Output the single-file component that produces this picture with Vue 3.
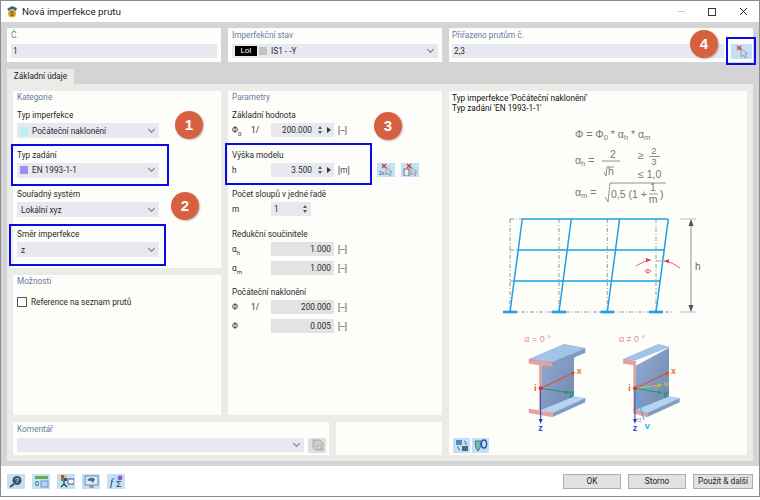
<template>
  <div class="window">
    <header class="titlebar">
      <svg class="app-icon" width="12" height="13" viewBox="0 0 12 13">
        <path d="M1 4 L6 1 L11 3 L10 6 L6 4 L3 6 Z" fill="#3d5f86" />
        <circle cx="6" cy="8.5" r="4" fill="#e2a92e" />
        <text x="6" y="11" font-size="7" text-anchor="middle" fill="#3a3a3a" class="sans">6</text>
      </svg>
      <span class="title">Nová imperfekce prutu</span>
      <div class="win-controls">
        <span class="win-min"></span>
        <span class="win-max"></span>
        <svg width="9" height="9" viewBox="0 0 9 9"><path d="M1 1 L8 8 M8 1 L1 8" stroke="#222" stroke-width="1" fill="none" /></svg>
      </div>
    </header>

    <main class="main">
      <div class="top-row">
        <section class="panel top-panel">
          <div class="group-title">Č.</div>
          <div class="input">1</div>
        </section>
        <section class="panel top-panel">
          <div class="group-title">Imperfekční stav</div>
          <div class="select">
            <span class="chip">LoI</span>
            <span class="swatch grey"></span>
            <span>IS1 - -Y</span>
          </div>
        </section>
        <section class="panel top-panel assigned">
          <div class="group-title">Přiřazeno prutům č.</div>
          <div class="assigned-row">
            <div class="input grow">2,3</div>
            <button class="tool pick">
              <svg width="14" height="13" viewBox="0 0 14 13">
                <path d="M6 3 L6 12 L8 10 L10 13 L11.5 12 L10 9 L12.5 9 Z" fill="#d3d8dd" stroke="#7d8791" stroke-width=".7" />
                <path d="M2 1 L6 5 M6 1 L2 5" stroke="#e0303a" stroke-width="1.3" />
              </svg>
            </button>
          </div>
        </section>
      </div>

      <div class="tab">Základní údaje</div>

      <div class="tab-body">
        <section class="panel category">
          <div class="group-title head">Kategorie</div>
          <div v-for="f in categoryFields" :key="f.label" class="field">
            <label>{{ f.label }}</label>
            <div class="select" :class="{ plain: !f.color }">
              <span v-if="f.color" class="swatch" :style="{ background: f.color }"></span>
              <span>{{ f.value }}</span>
            </div>
          </div>
        </section>

        <section class="panel params">
          <div class="group-title head">Parametry</div>
          <div class="param-group">
            <label>Základní hodnota</label>
            <div class="param-row">
              <span class="sym">Φ<sub>0</sub></span><span>1/</span>
              <div class="spin">200.000<span class="updown"></span><span class="next"></span></div>
              <span class="unit">[--]</span>
            </div>
          </div>
          <div class="param-group">
            <label>Výška modelu</label>
            <div class="param-row">
              <span class="sym">h</span><span></span>
              <div class="spin">3.500<span class="updown"></span><span class="next"></span></div>
              <span class="unit">[m]</span>
              <button class="tool height-tool first">
                <svg width="14" height="13" viewBox="0 0 14 13">
                  <path d="M7 4 L7 12 L9 10 L11 13 L12 12 L11 9 L13 9 Z" fill="#d3d8dd" stroke="#7d8791" stroke-width=".7" />
                  <path d="M3 1 L7 5 M7 1 L3 5" stroke="#e0303a" stroke-width="1.3" />
                  <text x="0" y="12" font-size="5" class="sans" fill="#444">2x</text>
                </svg>
              </button>
              <button class="tool height-tool">
                <svg width="14" height="13" viewBox="0 0 14 13">
                  <path d="M8 4 L8 12 L10 10 L12 13 L13 12 L12 9 L14 9 Z" fill="#d3d8dd" stroke="#7d8791" stroke-width=".7" />
                  <path d="M4 1 L8 5 M8 1 L4 5" stroke="#e0303a" stroke-width="1.3" />
                  <rect x="1" y="6" width="5" height="7" fill="#e8eef2" stroke="#555" stroke-width=".8" />
                </svg>
              </button>
            </div>
          </div>
          <div class="param-group">
            <label>Počet sloupů v jedné řadě</label>
            <div class="param-row">
              <span class="sym">m</span><span></span>
              <div class="spin short"><span class="left">1</span><span class="updown"></span></div>
            </div>
          </div>
          <div class="param-group">
            <label>Redukční součinitele</label>
            <div class="param-row">
              <span class="sym">α<sub>h</sub></span><span></span>
              <div class="readonly">1.000</div>
              <span class="unit">[--]</span>
            </div>
            <div class="param-row">
              <span class="sym">α<sub>m</sub></span><span></span>
              <div class="readonly">1.000</div>
              <span class="unit">[--]</span>
            </div>
          </div>
          <div class="param-group">
            <label>Počáteční naklonění</label>
            <div class="param-row">
              <span class="sym">Φ</span><span>1/</span>
              <div class="readonly">200.000</div>
              <span class="unit">[--]</span>
            </div>
            <div class="param-row">
              <span class="sym">Φ</span><span></span>
              <div class="readonly">0.005</div>
              <span class="unit">[--]</span>
            </div>
          </div>
        </section>

        <section class="panel preview">
          <div class="preview-head">
            Typ imperfekce 'Počáteční naklonění'<br />
            Typ zadání 'EN 1993-1-1'
          </div>
          <svg class="drawing" width="298" height="321" viewBox="449 115 298 321">
            <defs>
              <linearGradient id="web" x1="0" y1="0" x2="1" y2="1">
                <stop offset="0" stop-color="#93acd6" />
                <stop offset="1" stop-color="#6f86ad" />
              </linearGradient>
            </defs>

            <!-- formula -->
            <g class="formula">
              <text x="575" y="138">Φ = Φ<tspan font-size="7.5" dy="2">0</tspan><tspan dy="-2"> * α</tspan><tspan font-size="7.5" dy="2">h</tspan><tspan dy="-2"> * α</tspan><tspan font-size="7.5" dy="2">m</tspan></text>
              <text x="575" y="164">α<tspan font-size="7.5" dy="2">h</tspan><tspan dy="-2"> =</tspan></text>
              <text x="613" y="158" text-anchor="middle">2</text>
              <path d="M602 161 H620 M604 172 L606 176 L607 167 H614" />
              <text x="608" y="175">h</text>
              <text x="638" y="159">≥</text>
              <text x="654" y="154" class="frac" text-anchor="middle">2</text>
              <path d="M649 156.5 H660" />
              <text x="654" y="165" class="frac" text-anchor="middle">3</text>
              <text x="638" y="178">≤ 1,0</text>
              <text x="575" y="196">α<tspan font-size="7.5" dy="2">m</tspan><tspan dy="-2"> =</tspan></text>
              <path d="M605 197 L608 202 L610 183 H666" />
              <text x="611" y="198">0,5 (1 +</text>
              <text x="653" y="191" text-anchor="middle">1</text>
              <path d="M649 194 H658" />
              <text x="653" y="203" text-anchor="middle">m</text>
              <text x="660" y="198">)</text>
            </g>

            <!-- frame -->
            <g class="dash">
              <path v-for="x in frameBases" :key="x" :d="`M${x} 219 V312`" />
              <path d="M503 312 H672 M510 219 H522 M510 250 H518 M510 281 H514" />
            </g>
            <g class="beam">
              <path d="M522 219 H668 M518 250 H664 M514 281 H660" />
              <path v-for="x in frameBases" :key="x" :d="`M${x + 12.3} 219 L${x} 312`" />
            </g>
            <path v-for="x in frameBases" :key="x" :d="`M${x - 7} 312 H${x + 7}`" stroke="#1e9fe8" stroke-width="2.6" />
            <path d="M656 261 H664" stroke="#aaa" stroke-width="1" />
            <path d="M680 219 H696 M680 312 H696" stroke="#bbb" stroke-width="1" />
            <path d="M691 222 V309" stroke="#777" stroke-width=".8" />
            <path d="M688.5 226 L691 219 L693.5 226 Z M688.5 305 L691 312 L693.5 305 Z" fill="#4a5068" />
            <text x="695" y="270" class="sans" font-size="10" fill="#666">h</text>
            <path d="M636 266 Q643 261 651 260 M680 268 Q673 262 664 261" stroke="#ee2f6d" stroke-width=".8" fill="none" />
            <path d="M651 260 L646 258 L646 262 Z M664 261 L669 259 L669 263 Z" fill="#ee2f6d" />
            <text x="648" y="274" class="sans" font-size="8" fill="#ee2f6d" text-anchor="middle">Φ</text>

            <!-- sections, coordinates taken at 3x -->
            <g transform="translate(450 325) scale(.3333)" class="sans">
              <text x="223" y="52" class="alpha">α = 0 °</text>
              <polygon points="274,122 372,85 372,215 274,255" fill="url(#web)" />
              <polygon points="237,103 342,58 406,70 305,113" fill="#a3c4e8" stroke="#7f95b5" />
              <polygon points="305,113 406,70 406,83 308,126" fill="#7f9cc2" />
              <polygon points="237,103 305,113 308,126 274,121 274,255 268,255 268,120 237,115" fill="#e8a0a0" stroke="#b88" />
              <polygon points="274,255 372,215 406,220 308,264" fill="#b5d4f2" stroke="#8ba3c2" />
              <polygon points="308,264 406,220 406,232 308,276" fill="#7f9cc2" />
              <polygon points="237,252 308,264 308,276 237,263" fill="#e8a0a0" stroke="#b88" />
              <path d="M272 190 L368 145" stroke="#e8421c" stroke-width="3" />
              <path d="M272 190 L350 202" stroke="#129a6c" stroke-width="3" />
              <path d="M272 190 V288" stroke="#1b3fc0" stroke-width="3" />
              <path d="M376 141 L362 142 L367 152 Z" fill="#e8421c" />
              <path d="M360 203 L346 196 L346 208 Z" fill="#129a6c" />
              <path d="M272 296 L266 282 L278 282 Z" fill="#1b3fc0" />
              <circle cx="272" cy="190" r="6" fill="#e8301c" />
              <text x="252" y="198" class="ax" fill="#e8601c">i</text>
              <text x="380" y="146" class="ax" fill="#f0703c">x</text>
              <text x="356" y="212" class="ax" fill="#129a6c">y</text>
              <text x="265" y="318" class="ax" fill="#2a50c8">z</text>

              <text x="507" y="52" class="alpha">α ≠ 0 °</text>
              <polygon points="557,122 657,68 657,215 557,255" fill="url(#web)" />
              <polygon points="520,103 625,58 657,66 557,105" fill="#a3c4e8" stroke="#7f95b5" />
              <polygon points="520,103 557,108 557,255 551,255 551,120 520,115" fill="#e8a0a0" stroke="#b88" />
              <polygon points="557,255 657,215 689,220 592,264" fill="#b5d4f2" stroke="#8ba3c2" />
              <polygon points="592,264 689,220 689,232 592,276" fill="#7f9cc2" />
              <polygon points="551,252 592,264 592,276 551,265" fill="#e8a0a0" stroke="#b88" />
              <path d="M555 190 L651 145" stroke="#e8421c" stroke-width="3" />
              <path d="M555 190 L628 181" stroke="#b8cc30" stroke-width="3" />
              <path d="M555 190 L628 202" stroke="#129a6c" stroke-width="3" />
              <path d="M555 190 V288" stroke="#1b3fc0" stroke-width="3" />
              <path d="M555 190 L582 285" stroke="#1cb4f0" stroke-width="3" />
              <path d="M659 141 L645 142 L650 152 Z" fill="#e8421c" />
              <path d="M637 180 L624 175 L625 187 Z" fill="#b8cc30" />
              <path d="M637 203 L624 196 L624 208 Z" fill="#129a6c" />
              <path d="M555 296 L549 282 L561 282 Z" fill="#1b3fc0" />
              <circle cx="555" cy="190" r="6" fill="#e8301c" />
              <text x="535" y="198" class="ax" fill="#e8601c">i</text>
              <text x="663" y="146" class="ax" fill="#f0703c">x</text>
              <text x="642" y="183" class="ax small-ax" fill="#b8cc30">u</text>
              <text x="640" y="214" class="ax small-ax" fill="#129a6c">y</text>
              <text x="612" y="198" class="ax-a">α</text>
              <text x="561" y="292" class="ax-a">α</text>
              <text x="548" y="318" class="ax" fill="#2a50c8">z</text>
              <text x="584" y="312" class="ax" fill="#1cb4f0">v</text>
            </g>
          </svg>
          <div class="preview-tools">
            <button class="tool small">
              <svg width="14" height="13" viewBox="0 0 14 13">
                <rect x="1" y="1" width="6" height="5" fill="#5a86b8" />
                <rect x="7" y="7" width="6" height="5" fill="#5b6572" />
                <path d="M9 2 Q12 3 11 6 M5 11 Q2 10 3 7" stroke="#3a6ea8" fill="none" />
              </svg>
            </button>
            <button class="tool small">
              <svg width="14" height="13" viewBox="0 0 14 13">
                <path d="M1 2 H7 L6 9 L4 12 L2 9 Z" fill="#7ab8a8" stroke="#35606a" stroke-width=".8" />
                <ellipse cx="10" cy="5" rx="2.6" ry="4" fill="none" stroke="#2a4fa8" stroke-width="1.4" />
              </svg>
            </button>
          </div>
        </section>

        <section class="panel options">
          <div class="group-title head">Možnosti</div>
          <label class="check"><span class="box"></span>Reference na seznam prutů</label>
        </section>

        <section class="panel comment">
          <div class="group-title">Komentář</div>
          <div class="comment-row">
            <div class="select grow"></div>
            <button class="tool grey">
              <svg width="13" height="12" viewBox="0 0 13 12">
                <path d="M2 1 H9 L12 4 V11 H4 L2 8 Z" fill="#c9cbcc" stroke="#a8aaac" />
                <rect x="7" y="7" width="3" height="3" fill="#eee" stroke="#999" stroke-width=".6" />
              </svg>
            </button>
          </div>
        </section>

        <section class="panel blank"></section>
      </div>
    </main>

    <footer class="footer">
      <button class="tool foot">
        <svg width="14" height="13" viewBox="0 0 14 13">
          <circle cx="8" cy="5.5" r="4.5" fill="#46535f" />
          <path d="M5 9 L1 12" stroke="#46535f" stroke-width="2" />
          <text x="8" y="8" font-size="7" text-anchor="middle" class="sans" fill="#fff">?</text>
        </svg>
      </button>
      <button class="tool foot">
        <svg width="15" height="13" viewBox="0 0 15 13">
          <rect x="1" y="1" width="13" height="3" fill="#63b04a" />
          <text x="1" y="11" font-size="7" class="sans" fill="#333">0</text>
          <rect x="7" y="6" width="7" height="6" fill="#b5d4f2" stroke="#5a86b8" stroke-width=".8" />
        </svg>
      </button>
      <button class="tool foot">
        <svg width="15" height="13" viewBox="0 0 15 13">
          <rect x="2" y="0" width="3" height="3" fill="#e03a2e" />
          <rect x="5" y="0" width="3" height="3" fill="#e8c82e" />
          <rect x="2" y="3" width="3" height="3" fill="#3aa84a" />
          <rect x="5" y="3" width="3" height="3" fill="#2a50c8" />
          <path d="M5 6 V10 M2 12 L5 9 L8 12" stroke="#333" stroke-width="1.2" fill="none" />
          <rect x="9" y="4" width="6" height="5" fill="#fff" stroke="#445" stroke-width=".9" />
        </svg>
      </button>
      <button class="tool foot">
        <svg width="15" height="13" viewBox="0 0 15 13">
          <rect x="1" y="1" width="13" height="9" fill="#dfe9f2" stroke="#66727e" stroke-width=".8" />
          <path d="M3 5 Q7 1 11 4 L9 8 Q7 5 5 6 Z" fill="#3c6f9e" />
          <path d="M5 12 H10 M7.5 10 V12" stroke="#66727e" />
        </svg>
      </button>
      <button class="tool foot">
        <svg width="15" height="13" viewBox="0 0 15 13">
          <text x="1" y="11" font-size="11" font-style="italic" class="serif" fill="#2a3550">f</text>
          <text x="7" y="12" font-size="9" class="sans" fill="#2a3550">Σ</text>
          <circle cx="11" cy="3" r="2.4" fill="#8c5ac8" />
        </svg>
      </button>
      <div class="actions">
        <button class="btn ok">OK</button>
        <button class="btn ok">Storno</button>
        <button class="btn apply">Použít &amp; další</button>
      </div>
    </footer>

    <!-- callouts drawn over the dialog -->
    <span class="mark mark-type"></span>
    <span class="mark mark-dir"></span>
    <span class="mark mark-height"></span>
    <span class="mark mark-pick"></span>
    <span class="badge badge-1">1</span>
    <span class="badge badge-2">2</span>
    <span class="badge badge-3">3</span>
    <span class="badge badge-4">4</span>
  </div>
</template>

<script setup>
const categoryFields = [
  { label: 'Typ imperfekce', value: 'Počáteční naklonění', color: '#b6f0f4' },
  { label: 'Typ zadání', value: 'EN 1993-1-1', color: '#9b8df2' },
  { label: 'Souřadný systém', value: 'Lokální xyz' },
  { label: 'Směr imperfekce', value: 'z' },
];

const frameBases = [510, 559, 607.3, 656];
</script>

<style>
html, body {
  margin: 0;
  background: #fff;
}
</style>

<style scoped>
.window {
  position: relative;
  width: 760px;
  height: 497px;
  box-sizing: border-box;
  border: 1px solid #8c8c8c;
  background: #fff;
  font-family: Roboto, "Noto Sans", sans-serif;
  font-size: 8.25px;
  color: #2a2a2a;
  overflow: hidden;
}

.sans {
  font-family: "Liberation Sans", sans-serif;
}

.serif {
  font-family: "Liberation Serif", serif;
}

.titlebar {
  display: flex;
  align-items: center;
  height: 21px;
  padding-left: 5px;
  box-sizing: border-box;
}

.app-icon {
  margin-right: 4px;
}

.title {
  font-size: 9.8px;
  color: #222;
}

.win-controls {
  display: flex;
  align-items: center;
  margin-left: auto;
  margin-right: 11px;
  gap: 23px;
}

.win-min {
  width: 7px;
  height: 1px;
  background: #ccc;
}

.win-max {
  width: 6px;
  height: 6px;
  border: 1px solid #333;
}

.main {
  height: 444px;
  background: #d4d4d6;
  padding: 6px 6px 0;
  box-sizing: border-box;
}

.top-row {
  display: flex;
  gap: 7px;
}

.panel {
  background: #fdfdf9;
  box-sizing: border-box;
}

.top-panel {
  width: 214px;
  height: 34px;
  padding: 0 4px;
}

.assigned {
  width: 304px;
  padding-left: 3px;
  padding-right: 1px;
}

.group-title {
  height: 16px;
  line-height: 14px;
  color: #6a7ca6;
}

.group-title.head {
  height: 17px;
  line-height: 13px;
}

.input,
.select {
  display: flex;
  align-items: center;
  height: 14px;
  background: #e8e8f0;
  padding-left: 2px;
  color: #2a2a2a;
}

.select::after {
  content: "";
  width: 4px;
  height: 4px;
  margin-left: auto;
  margin-right: 5px;
  margin-top: -3px;
  border-right: 1px solid #777;
  border-bottom: 1px solid #777;
  transform: rotate(45deg);
}

.chip {
  width: 22px;
  height: 10px;
  line-height: 10px;
  margin-left: 1px;
  background: #000;
  color: #fff;
  text-align: center;
  font-size: 8px;
}

.swatch {
  width: 8px;
  height: 8px;
  margin: 0 4px 0 2px;
}

.swatch.grey {
  background: #c4c4c2;
}

.assigned-row,
.comment-row {
  display: flex;
  gap: 4px;
}

.grow {
  flex: 1;
}

.tool {
  display: flex;
  align-items: center;
  justify-content: center;
  padding: 0;
  border: 0;
  background: #c2e0f8;
}

.pick {
  width: 21px;
  height: 15px;
  margin-left: 3px;
}

.tab {
  width: 67px;
  height: 15px;
  line-height: 15px;
  margin-top: 7px;
  background: #ebebe7;
  text-align: center;
  color: #222;
}

.tab-body {
  display: grid;
  grid-template-columns: 208px 101px 106px 298px;
  grid-template-rows: 177px 140px 33px;
  gap: 7px;
  height: 377px;
  padding: 7px 6px 6px;
  box-sizing: border-box;
  background: #ebebe7;
}

.category {
  grid-column: 1;
  grid-row: 1;
  padding: 0 4px;
}

.field {
  width: 142px;
  margin-bottom: 9.7px;
}

label {
  display: block;
  height: 15px;
  line-height: 14px;
  color: #2a2a2a;
}

.field .select {
  height: 15px;
  padding-left: 1px;
}

.field .select.plain {
  padding-left: 4px;
}

.params {
  grid-column: 2 / 4;
  grid-row: 1 / 3;
  padding: 0 4px;
}

.param-group {
  margin-bottom: 10.7px;
}

.param-row {
  display: grid;
  grid-template-columns: 19px 20px 63px auto 18px 18px;
  align-items: center;
  height: 14px;
  margin-bottom: 4.5px;
}

.param-group .param-row:last-child {
  margin-bottom: 0;
}

.sym sub {
  font-size: 6px;
  line-height: 0;
}

.spin,
.readonly {
  display: flex;
  align-items: center;
  justify-content: flex-end;
  height: 14px;
  padding-right: 3px;
  background: #e8e8f0;
  box-sizing: border-box;
}

.readonly {
  background: #e3e3e3;
}

.spin.short {
  width: 40px;
}

.spin .left {
  margin-right: auto;
  margin-left: 3px;
}

.updown {
  position: relative;
  width: 5px;
  height: 12px;
  margin-left: 6px;
}

.updown::before,
.updown::after {
  content: "";
  position: absolute;
  left: 0;
  border-left: 2.5px solid transparent;
  border-right: 2.5px solid transparent;
}

.updown::before {
  top: 2px;
  border-bottom: 3px solid #555;
}

.updown::after {
  bottom: 2px;
  border-top: 3px solid #555;
}

.next {
  width: 0;
  height: 0;
  margin-left: 4px;
  border-top: 3px solid transparent;
  border-bottom: 3px solid transparent;
  border-left: 4px solid #333;
}

.unit {
  margin-left: 4px;
  color: #4a4458;
  white-space: nowrap;
}

.height-tool {
  width: 18px;
  height: 14px;
  margin-left: 3px;
}

.height-tool.first {
  margin-left: 0;
}

.param-row:has(.height-tool) {
  grid-template-columns: 19px 20px 63px 43px 21px 18px;
}

.preview {
  grid-column: 4;
  grid-row: 1 / 4;
  display: flex;
  flex-direction: column;
}

.preview-head {
  height: 24px;
  padding: 2px 3px 0;
  box-sizing: border-box;
  line-height: 10px;
  color: #111;
}

.drawing {
  display: block;
}

.formula {
  font-family: "Liberation Sans", sans-serif;
  font-size: 10.5px;
  fill: #777;
}

.formula .frac {
  font-size: 9.5px;
}

.formula path {
  fill: none;
  stroke: #777;
  stroke-width: .8;
}

.dash path {
  fill: none;
  stroke: #999;
  stroke-width: 1;
  stroke-dasharray: 4 2 1 2;
}

.beam path {
  fill: none;
  stroke: #1e9fe8;
  stroke-width: 1.5;
}

.alpha {
  font-size: 27px;
  fill: #ea8a9c;
}

.ax {
  font-size: 27px;
  font-weight: bold;
}

.small-ax {
  font-size: 23px;
}

.ax-a {
  font-size: 23px;
  fill: #ea8a9c;
}

.preview-tools {
  display: flex;
  gap: 2px;
  padding: 2px 0 0 4px;
}

.tool.small {
  width: 17px;
  height: 15px;
}

.options {
  grid-column: 1;
  grid-row: 2;
  padding: 0 4px;
}

.check {
  display: flex;
  align-items: center;
  height: 10px;
  margin-top: 5px;
  gap: 4px;
}

.box {
  width: 8px;
  height: 8px;
  border: 1px solid #555;
  background: #fff;
}

.comment {
  grid-column: 1 / 3;
  grid-row: 3;
  padding: 0 3px 0 4px;
}

.comment .group-title {
  height: 15.5px;
}

.comment-row {
  height: 14px;
}

.tool.grey {
  width: 18px;
  height: 15px;
  background: #e0e0e0;
}

.blank {
  grid-column: 3;
  grid-row: 3;
}

.footer {
  display: flex;
  align-items: center;
  gap: 7px;
  height: 30px;
  padding: 0 6px;
  box-sizing: border-box;
}

.tool.foot {
  width: 18px;
  height: 15px;
}

.actions {
  display: flex;
  gap: 7px;
  margin-left: auto;
}

.btn {
  height: 15px;
  padding: 0;
  border: 1px solid #adadad;
  background: #e1e1e1;
  font: inherit;
  color: #222;
  box-sizing: border-box;
}

.btn.ok {
  width: 58px;
}

.btn.apply {
  width: 60px;
}

.mark {
  position: absolute;
  box-sizing: border-box;
  border: 2px solid #0a0ae6;
}

.mark-type {
  left: 10px;
  top: 143px;
  width: 158px;
  height: 42px;
}

.mark-dir {
  left: 8px;
  top: 223px;
  width: 157px;
  height: 42px;
}

.mark-height {
  left: 224px;
  top: 142px;
  width: 147px;
  height: 42px;
}

.mark-pick {
  left: 725px;
  top: 36px;
  width: 30px;
  height: 28px;
}

.badge {
  position: absolute;
  width: 28px;
  height: 28px;
  line-height: 28px;
  border-radius: 50%;
  background: #d6603f;
  box-shadow: 1px 1px 2px rgba(0, 0, 0, .25);
  color: #fff;
  text-align: center;
  font-family: "Liberation Sans", sans-serif;
  font-size: 15px;
  font-weight: bold;
}

.badge-1 {
  left: 174px;
  top: 110px;
}

.badge-2 {
  left: 170px;
  top: 191px;
}

.badge-3 {
  left: 373px;
  top: 111px;
}

.badge-4 {
  left: 689px;
  top: 29px;
}
</style>
